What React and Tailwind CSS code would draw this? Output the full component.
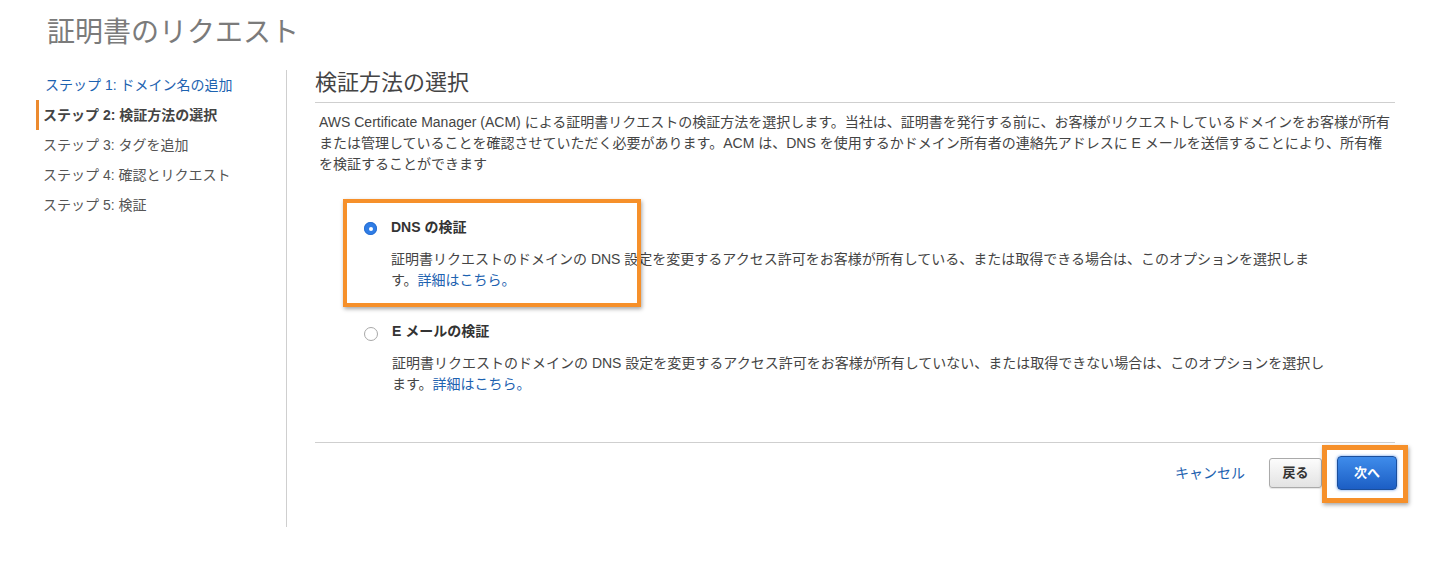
const font = { fontFamily: '"Liberation Sans", "Noto Sans CJK JP", sans-serif' };

const steps = [
    { label: 'ステップ 1: ドメイン名の追加', state: 'link' },
    { label: 'ステップ 2: 検証方法の選択', state: 'active' },
    { label: 'ステップ 3: タグを追加', state: 'idle' },
    { label: 'ステップ 4: 確認とリクエスト', state: 'idle' },
    { label: 'ステップ 5: 検証', state: 'idle' },
];

const Radio = ({ checked }) => (
    checked ? (
        <span className="mt-[5px] flex h-[13px] w-[13px] shrink-0 items-center justify-center rounded-full bg-[#2f7de6] shadow-[inset_0_0_0_1px_#2a6fd0]">
            <span className="h-[4px] w-[4px] rounded-full bg-white" />
        </span>
    ) : (
        <span className="mt-[6px] h-[14px] w-[14px] shrink-0 rounded-full border border-[#a8a8a8] bg-white" />
    )
);

const Option = ({ checked, title, desc }) => (
    <div className="flex items-start gap-[14px]">
        <Radio checked={checked} />
        <div className="w-[937px]">
            <div className="text-[14px] font-bold leading-[20px] text-[#333]">{title}</div>
            <p className="mt-[12px] text-[14px] leading-[21px] text-[#444]">
                <span>{desc}</span>
                <a href="#" className="text-[#1d62b0]">詳細はこちら。</a>
            </p>
        </div>
    </div>
);

export default function App() {
    return (
        <div className="relative h-[585px] w-full overflow-hidden bg-white" style={font}>
            <div className="h-[70px] pl-[47px] pt-[14px]">
                <h1 className="text-[28px] font-normal leading-[38px] text-[#7b7b7b]">証明書のリクエスト</h1>
            </div>

            <div className="flex">
                <div className="h-[457px] w-[287px] shrink-0 border-r border-[#cfcfcf] pl-[36px]">
                    {steps.map((s) => (
                        <div
                            key={s.label}
                            className={
                                s.state === 'active'
                                    ? 'flex h-[30px] items-center border-l-[3px] border-[#ec8a2f] pl-[4px] text-[14px] font-bold text-[#444]'
                                    : s.state === 'link'
                                    ? 'flex h-[30px] items-center pl-[9px] text-[14px] text-[#1d62b0]'
                                    : 'flex h-[30px] items-center pl-[7px] text-[14px] text-[#555]'
                            }
                        >
                            {s.label}
                        </div>
                    ))}
                </div>

                <div className="ml-[28px] w-[1080px]">
                    <h2 className="border-b border-[#cfcfcf] pb-[6px] text-[22px] font-normal leading-[26px] text-[#444]">検証方法の選択</h2>
                    <p className="mt-[9px] pl-[4px] pr-[3px] text-[14px] leading-[21px] text-[#444]">
                        AWS Certificate Manager (ACM) による証明書リクエストの検証方法を選択します。当社は、証明書を発行する前に、お客様がリクエストしているドメインをお客様が所有または管理していることを確認させていただく必要があります。ACM は、DNS を使用するかドメイン所有者の連絡先アドレスに E メールを送信することにより、所有権を検証することができます
                    </p>

                    <div className="mt-[42px] pl-[49px]">
                        <Option
                            checked
                            title="DNS の検証"
                            desc="証明書リクエストのドメインの DNS 設定を変更するアクセス許可をお客様が所有している、または取得できる場合は、このオプションを選択します。"
                        />
                        <div className="mt-[30px]">
                            <Option
                                title="E メールの検証"
                                desc="証明書リクエストのドメインの DNS 設定を変更するアクセス許可をお客様が所有していない、または取得できない場合は、このオプションを選択します。"
                            />
                        </div>
                    </div>

                    <div className="mt-[47px] border-t border-[#cfcfcf]">
                        <div className="flex items-center justify-end pt-[13px]">
                            <a href="#" className="mr-[24px] text-[14px] text-[#1d62b0]">キャンセル</a>
                            <button className="h-[30px] w-[53px] rounded-[3px] border border-[#aaa] bg-gradient-to-b from-[#fcfcfc] to-[#e3e3e3] text-[13px] font-bold text-[#333] shadow-[0_1px_1px_rgba(0,0,0,0.1)]">
                                戻る
                            </button>
                            <button className="ml-[15px] mr-[-2px] h-[34px] w-[60px] rounded-[4px] border border-[#1b4f9c] bg-gradient-to-b from-[#3f8ceb] to-[#1c5ec4] text-[13px] font-bold text-white shadow-[0_0_3px_rgba(60,130,230,0.8)]">
                                次へ
                            </button>
                        </div>
                    </div>
                </div>
            </div>

            {/* annotation frames drawn over the page */}
            <div className="pointer-events-none absolute left-[343px] top-[199px] h-[108px] w-[298px] border-4 border-[#f6902a] shadow-[1px_2px_4px_rgba(0,0,0,0.35)]" />
            <div className="pointer-events-none absolute left-[1322px] top-[445px] h-[58px] w-[86px] border-[5px] border-[#f6902a] shadow-[1px_2px_4px_rgba(0,0,0,0.35)]" />
        </div>
    );
}
